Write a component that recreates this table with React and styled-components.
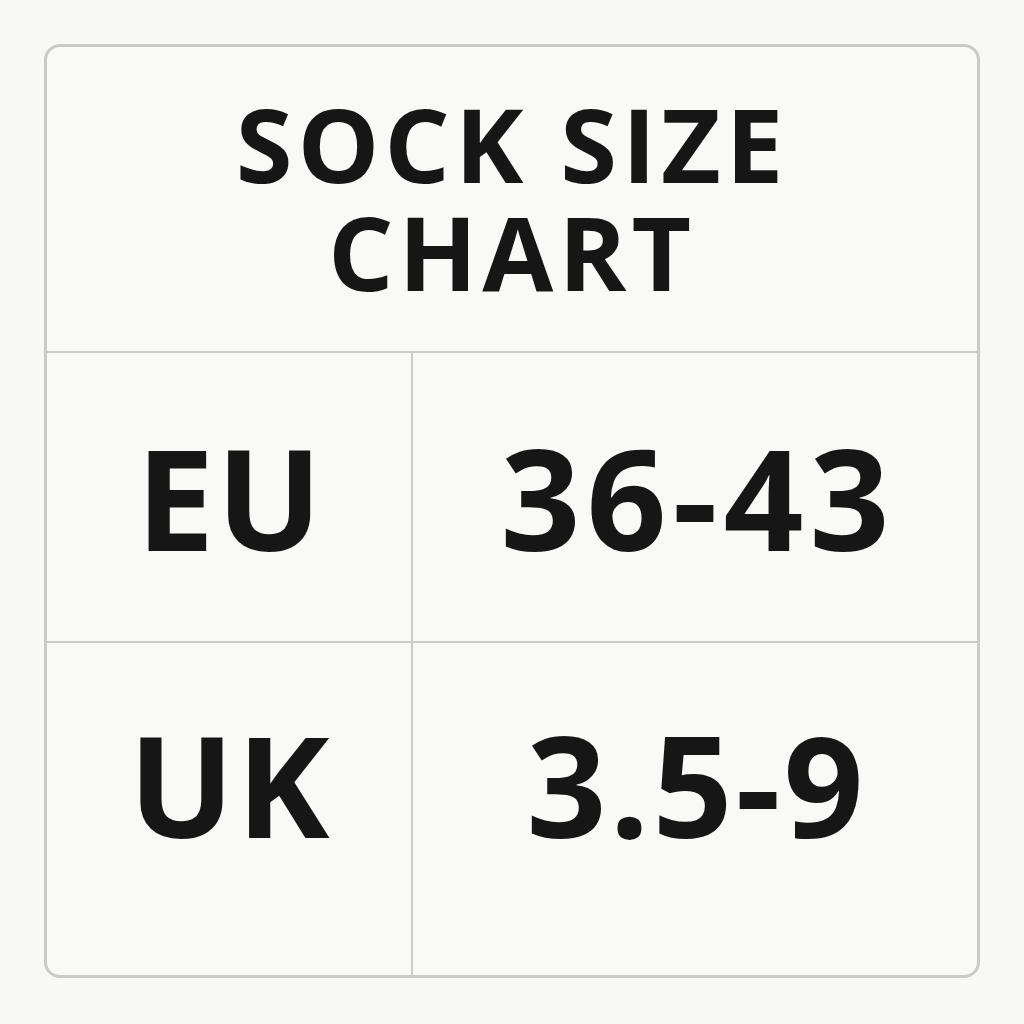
import React from 'react';
import styled, { createGlobalStyle } from 'styled-components';

const GlobalStyle = createGlobalStyle`
  html, body {
    margin: 0;
    padding: 0;
    background: #f8f8f6;
  }
  body {
    font-family: 'Open Sans', 'DejaVu Sans', sans-serif;
    color: #161616;
  }
`;

const Page = styled.div`
  width: 1024px;
  height: 1024px;
  padding: 44px 0 0 44px;
  box-sizing: border-box;
`;

const Card = styled.div`
  width: 936px;
  height: 934px;
  box-sizing: border-box;
  border: 3px solid #cacaca;
  border-radius: 16px;
  background: #f9f9f7;
  display: grid;
  grid-template-columns: 366px 1fr;
  grid-template-rows: 306px 290px 1fr;
  overflow: hidden;
`;

const Header = styled.div`
  grid-column: 1 / span 2;
  border-bottom: 2px solid #cbcbcb;
  display: flex;
  align-items: center;
  justify-content: center;
  padding-bottom: 4px;
`;

const Title = styled.h1`
  margin: 0;
  font-size: 103px;
  font-weight: 700;
  line-height: 108px;
  letter-spacing: 5px;
  text-align: center;
`;

const Cell = styled.div`
  display: flex;
  align-items: center;
  justify-content: center;
  font-size: 140px;
  font-weight: 700;
  line-height: 1;
  letter-spacing: ${(p) => p.$spacing}px;
  text-indent: ${(p) => p.$spacing}px;
  border-right: ${(p) => (p.$left ? '2px solid #cbcbcb' : 'none')};
  border-bottom: ${(p) => (p.$top ? '2px solid #cbcbcb' : 'none')};
  padding-bottom: ${(p) => (p.$top ? '0' : '50px')};
`;

const rows = [
  { label: 'EU', value: '36-43', spacing: 6 },
  { label: 'UK', value: '3.5-9', spacing: 3 },
];

const App = () => {
  return (
    <>
      <GlobalStyle />
      <Page>
        <Card>
          <Header>
            <Title>
              SOCK SIZE
              <br />
              CHART
            </Title>
          </Header>
          {rows.map((row, i) => (
            <React.Fragment key={i}>
              <Cell $left $top={i === 0} $spacing={2}>
                {row.label}
              </Cell>
              <Cell $top={i === 0} $spacing={row.spacing}>
                {row.value}
              </Cell>
            </React.Fragment>
          ))}
        </Card>
      </Page>
    </>
  );
};

export default App;
